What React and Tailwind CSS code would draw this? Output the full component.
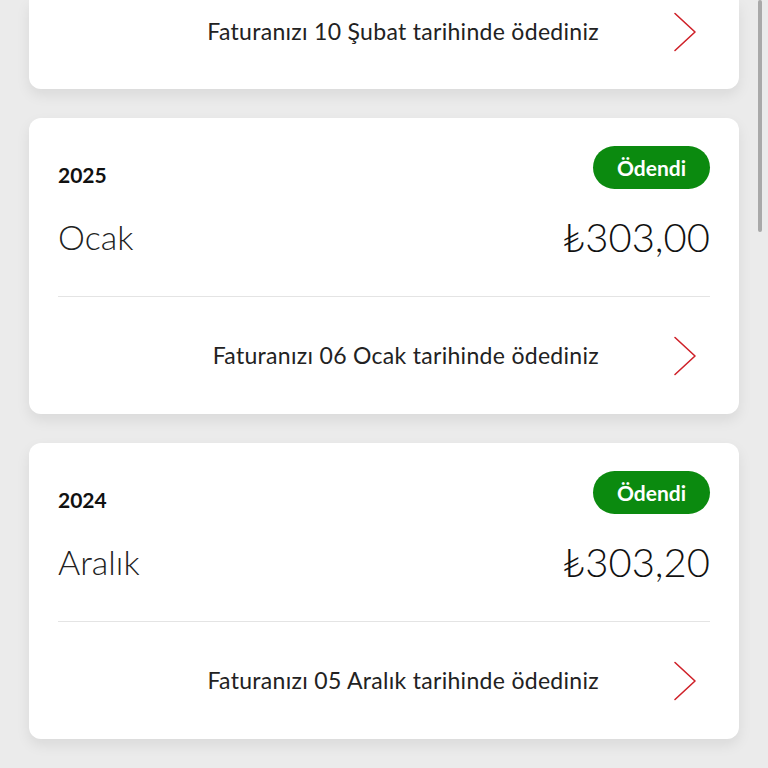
const BILLS = [
  { year: "2025", month: "Şubat", amount: "₺303,00", paid: "Faturanızı 10 Şubat tarihinde ödediniz" },
  { year: "2025", month: "Ocak", amount: "₺303,00", paid: "Faturanızı 06 Ocak tarihinde ödediniz" },
  { year: "2024", month: "Aralık", amount: "₺303,20", paid: "Faturanızı 05 Aralık tarihinde ödediniz" },
];

function Chevron() {
  return (
    <svg width="24" height="40" viewBox="0 0 24 40" fill="none" className="shrink-0">
      <path d="M2 1.5 L22 20 L2 38.5" stroke="#cf2129" strokeWidth="1.6" strokeLinecap="round" strokeLinejoin="round" />
    </svg>
  );
}

function PaidRow({ text }) {
  return (
    <div className="h-[117px] flex items-center justify-end">
      <span className="text-[23px] text-[#222] tracking-[0.3px]">{text}</span>
      <div className="ml-[74px] mr-[13px] flex items-center">
        <Chevron />
      </div>
    </div>
  );
}

function BillCard({ bill }) {
  return (
    <div className="bg-white rounded-[12px] shadow-[0_6px_14px_rgba(0,0,0,0.08)] px-[29px]">
      <div className="pt-[28px] flex items-end justify-between">
        <span className="text-[21px] font-bold text-[#111] leading-none pb-[4px]">{bill.year}</span>
        <span className="h-[43px] px-[24px] rounded-full bg-[#0b8a0f] text-white text-[21px] font-bold flex items-center">
          Ödendi
        </span>
      </div>
      <div className="flex items-center justify-between mt-[26px] mb-[37px] h-[44px]">
        <span className="text-[34px] font-light text-[#222] leading-none">{bill.month}</span>
        <span className="text-[40px] font-light text-[#111] leading-none">{bill.amount}</span>
      </div>
      <div className="h-px bg-[#e4e4e4]" />
      <PaidRow text={bill.paid} />
    </div>
  );
}

export default function App() {
  return (
    <div className="relative h-[768px] overflow-hidden bg-[#ebebeb]" style={{ fontFamily: "Lato, 'Noto Sans', sans-serif" }}>
      <div className="px-[29px] flex flex-col gap-[29px]">
        {/* top card is scrolled past, only its last row shows */}
        <div className="bg-white rounded-b-[12px] shadow-[0_6px_14px_rgba(0,0,0,0.08)] px-[29px] h-[89px] overflow-hidden">
          <div className="-mt-[27px]">
            <PaidRow text={BILLS[0].paid} />
          </div>
        </div>
        <BillCard bill={BILLS[1]} />
        <BillCard bill={BILLS[2]} />
      </div>
      <div className="absolute right-[6px] top-0 w-[4px] h-[232px] rounded-full bg-[#a9a9a9]" />
    </div>
  );
}
